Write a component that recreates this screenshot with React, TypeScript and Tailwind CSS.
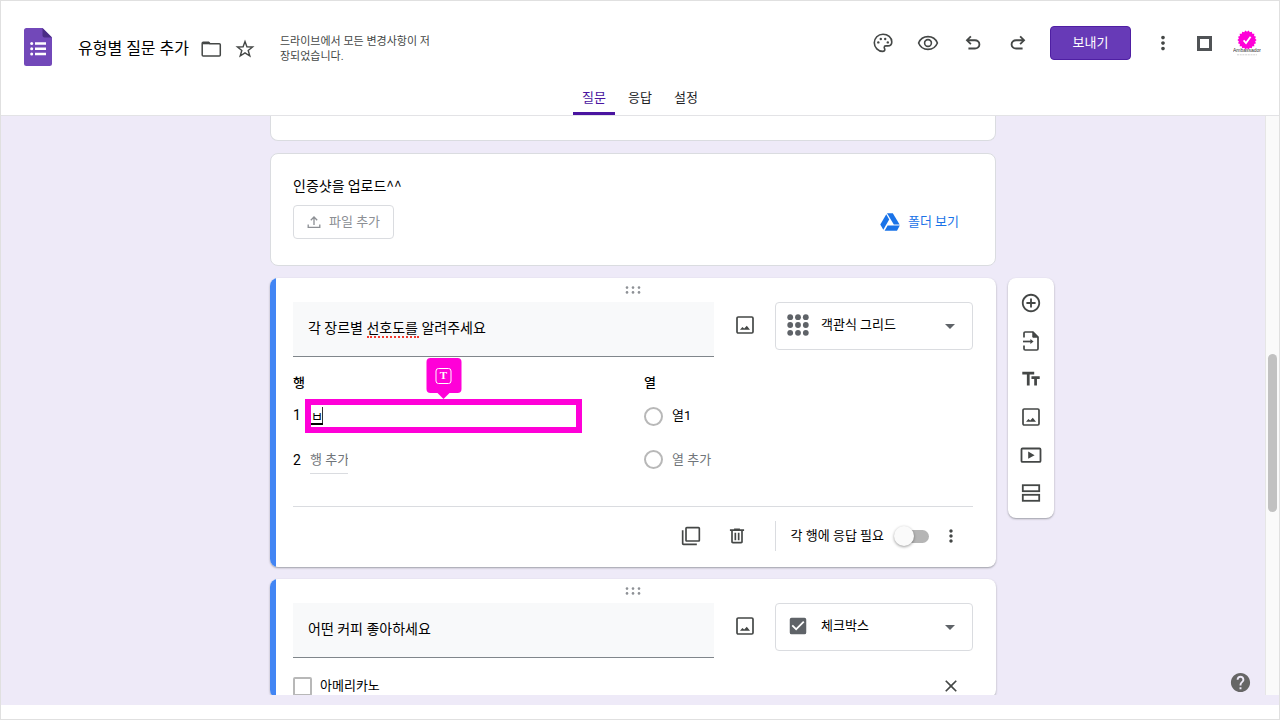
import type { ReactNode } from "react";
import {
  MdArrowDropDown,
  MdCheckBox,
  MdClose,
  MdFilterNone,
  MdHelp,
  MdMoreVert,
  MdOutlineAddCircleOutline,
  MdTextFields,
} from "react-icons/md";

const TABS = ["질문", "응답", "설정"];

function FormsLogo() {
  return (
    <svg viewBox="0 0 28 38" className="h-[38px] w-7 shrink-0" aria-hidden="true">
      <path
        d="M2.5 0H18.5L28 9.5V35.5A2.5 2.5 0 0 1 25.5 38H2.5A2.5 2.5 0 0 1 0 35.5V2.5A2.5 2.5 0 0 1 2.5 0Z"
        fill="#7248b9"
      />
      <path d="M18.5 0L28 9.5H20.5A2 2 0 0 1 18.5 7.5Z" fill="#4a2c85" />
      <g fill="#fff">
        <path d="M11 14.2H22V16.7H11ZM11 19.5H22V22H11ZM11 24.8H22V27.3H11Z" />
        <circle cx="7.7" cy="15.4" r="1.5" />
        <circle cx="7.7" cy="20.7" r="1.5" />
        <circle cx="7.7" cy="26" r="1.5" />
      </g>
    </svg>
  );
}

function FolderIcon() {
  return (
    <svg
      viewBox="0 0 24 24"
      className="h-6 w-6"
      fill="none"
      stroke="currentColor"
      strokeWidth="1.5"
    >
      <path d="M3.2 18V6.2Q3.2 5.2 4.2 5.2H9.6L11 6.8H20.3Q21.3 6.8 21.3 7.8V18Q21.3 19 20.3 19H4.2Q3.2 19 3.2 18Z" />
      <path d="M3.4 6.4H10.8" strokeWidth="1.8" />
    </svg>
  );
}

function StarIcon() {
  return (
    <svg
      viewBox="0 0 24 24"
      className="h-6 w-6"
      fill="none"
      stroke="currentColor"
      strokeWidth="1.4"
    >
      <path d="M12 4.6L13.9 9.8L19.6 10L15.2 13.5L16.8 19L12 15.9L7.2 19L8.8 13.5L4.4 10L10.1 9.8Z" />
    </svg>
  );
}

function PaletteIcon() {
  return (
    <svg viewBox="0 0 24 24" className="h-6 w-6">
      <path
        d="M12 3.2C7 3.2 3.3 7 3.3 11.8S7.2 20.4 11.7 20.4C13.1 20.4 13.8 19.5 13.8 18.5C13.8 17.6 13.2 17.2 13.2 16.4C13.2 15.5 13.9 14.9 14.8 14.9H16.8C19.2 14.9 20.8 13.2 20.8 11C20.8 6.5 16.8 3.2 12 3.2Z"
        fill="none"
        stroke="currentColor"
        strokeWidth="1.6"
      />
      <g fill="currentColor">
        <circle cx="7.3" cy="11.4" r="1.2" />
        <circle cx="9.8" cy="8" r="1.2" />
        <circle cx="14.2" cy="8" r="1.2" />
        <circle cx="16.8" cy="11.4" r="1.2" />
      </g>
    </svg>
  );
}

function EyeIcon() {
  return (
    <svg
      viewBox="0 0 24 24"
      className="h-6 w-6"
      fill="none"
      stroke="currentColor"
      strokeWidth="1.6"
    >
      <path d="M2.6 12C4.2 8 7.7 5.6 12 5.6S19.8 8 21.4 12C19.8 16 16.3 18.4 12 18.4S4.2 16 2.6 12Z" />
      <circle cx="12" cy="12" r="3.4" />
    </svg>
  );
}

function UndoIcon({ className }: { className?: string }) {
  return (
    <svg viewBox="0 0 24 24" fill="currentColor" className={className}>
      <path d="M7 19v-2h7.1q1.575 0 2.738-1T18 13.5T16.838 11T14.1 10H7.8l2.6 2.6L9 14L4 9l5-5l1.4 1.4L7.8 8h6.3q2.425 0 4.163 1.575T20 13.5t-1.737 3.925T14.1 19z" />
    </svg>
  );
}

function ImageIcon() {
  return (
    <svg viewBox="0 0 20 20" className="h-5 w-5">
      <rect
        x="2"
        y="2"
        width="16"
        height="16"
        rx="1.2"
        fill="none"
        stroke="currentColor"
        strokeWidth="1.7"
      />
      <path d="M5 14.7L7.4 12L9.2 13.4L11.8 10.8L15 14.7Z" fill="currentColor" />
    </svg>
  );
}

function ImportIcon() {
  return (
    <svg
      viewBox="0 0 22 22"
      className="h-[22px] w-[22px]"
      fill="none"
      stroke="currentColor"
      strokeWidth="1.7"
    >
      <path d="M4 7.5V3.2Q4 2 5.2 2H13L18 7V18.8Q18 20 16.8 20H5.2Q4 20 4 18.8V15.5" />
      <path d="M12.8 2V7.2H18Z" fill="currentColor" strokeWidth="1" />
      <path d="M3 11.5H11.5" />
      <path d="M10.4 8.9L13.6 11.5L10.4 14.1Z" fill="currentColor" stroke="none" />
    </svg>
  );
}

function VideoIcon() {
  return (
    <svg viewBox="0 0 22 22" className="h-[22px] w-[22px]">
      <rect
        x="1.5"
        y="4.5"
        width="19"
        height="13.4"
        rx="1"
        fill="none"
        stroke="currentColor"
        strokeWidth="1.8"
      />
      <path d="M8.2 7.6L14.6 11.2L8.2 14.8Z" fill="currentColor" />
    </svg>
  );
}

function SectionIcon() {
  return (
    <svg
      viewBox="0 0 22 22"
      className="h-[22px] w-[22px]"
      fill="none"
      stroke="currentColor"
      strokeWidth="1.8"
    >
      <rect x="2.8" y="3.2" width="16.4" height="6" />
      <rect x="2.8" y="12.8" width="16.4" height="6" />
    </svg>
  );
}

function TrashIcon() {
  return (
    <svg viewBox="0 0 24 24" fill="currentColor" className="h-5 w-5">
      <path d="M7 21q-.825 0-1.412-.587T5 19V6H3.5V4h5V3h7v1h5v2H19v13q0 .825-.587 1.413T17 21zM17 6H7v13h10zM9 17h2V8H9zm4 0h2V8h-2z" />
    </svg>
  );
}

function UploadIcon() {
  return (
    <svg
      viewBox="0 0 14 14"
      className="h-3.5 w-3.5"
      fill="none"
      stroke="currentColor"
      strokeWidth="1.3"
    >
      <path d="M1.2 9.4V12.4H12.8V9.4" />
      <path d="M7 10V2.2M3.8 5.2L7 2L10.2 5.2" />
    </svg>
  );
}

function DriveIcon() {
  return (
    <svg viewBox="0 0 20 18" className="h-[18px] w-5" fill="#1a73e8">
      <path d="M7 0.3H12.8L19.6 11.6H13.8Z" />
      <path d="M6.3 1.3L9.2 6.4L3.3 16.8L0.3 11.6Z" />
      <path d="M7.6 12.6H19.8L17 17.8H4.6Z" />
    </svg>
  );
}

function DotGridIcon() {
  return (
    <svg viewBox="0 0 22 22" className="h-[22px] w-[22px]" fill="#5f6368">
      {[3.2, 11, 18.8].map(y =>
        [3.2, 11, 18.8].map(x => <circle key={`${x}-${y}`} cx={x} cy={y} r="2.9" />)
      )}
    </svg>
  );
}

function DragHandle() {
  return (
    <svg
      viewBox="0 0 16 8"
      className="mx-auto h-2 w-4 shrink-0"
      fill="#8e9196"
      aria-hidden="true"
    >
      {[1.6, 6.4].map(y =>
        [2, 8, 14].map(x => <circle key={`${x}-${y}`} cx={x} cy={y} r="1.3" />)
      )}
    </svg>
  );
}

function Avatar() {
  const points = Array.from({ length: 36 }, (_, i) => {
    const r = i % 2 ? 8.2 : 9.6;
    const a = (i * Math.PI) / 18;
    return `${(14 + r * Math.cos(a)).toFixed(2)},${(10 + r * Math.sin(a)).toFixed(2)}`;
  }).join(" ");

  return (
    <button aria-label="계정" className="flex w-7 flex-col items-center">
      <svg viewBox="0 0 28 27" className="h-[27px] w-7">
        <polygon points={points} fill="#ff00d8" />
        <path d="M10.6 10.4L13 13L17.6 6.8" fill="none" stroke="#fff" strokeWidth="1.8" />
        <text
          x="14"
          y="22.4"
          textAnchor="middle"
          fontSize="5"
          fill="#333"
          className="font-['Liberation_Sans',sans-serif]"
        >
          Ambassador
        </text>
        <path d="M4 24.8H24" stroke="#ccc" strokeWidth="0.9" strokeDasharray="2 0.7" />
      </svg>
    </button>
  );
}

function IconButton({ label, children }: { label: string; children: ReactNode }) {
  return (
    <button
      aria-label={label}
      className="flex h-6 w-6 shrink-0 items-center justify-center text-[#444746]"
    >
      {children}
    </button>
  );
}

function Header() {
  return (
    <header className="shrink-0 border-b border-[#e3e3e6] bg-white">
      <div className="flex h-[84px] items-center pr-[18px] pl-[23px]">
        <div className="flex flex-1 items-center pt-2">
          <FormsLogo />
          <div className="flex items-center pt-1">
            <h1 className="ml-[26px] text-base whitespace-nowrap text-black">
              유형별 질문 추가
            </h1>
            <div className="ml-[10px] flex gap-[10px]">
              <IconButton label="폴더로 이동">
                <FolderIcon />
              </IconButton>
              <IconButton label="별표">
                <StarIcon />
              </IconButton>
            </div>
            <p className="ml-[23px] w-[152px] text-[11px] leading-[15px] break-all text-[#444746]">
              드라이브에서 모든 변경사항이 저장되었습니다.
            </p>
          </div>
        </div>
        <div className="flex items-center">
          <div className="flex gap-[21px]">
            <IconButton label="테마">
              <PaletteIcon />
            </IconButton>
            <IconButton label="미리보기">
              <EyeIcon />
            </IconButton>
            <IconButton label="실행취소">
              <UndoIcon className="h-[22px] w-[22px]" />
            </IconButton>
            <IconButton label="다시 실행">
              <UndoIcon className="h-[22px] w-[22px] -scale-x-100" />
            </IconButton>
          </div>
          <button className="ml-5 h-[34px] w-[81px] rounded border border-[#4f1fa3] bg-[#673ab7] text-[13px] text-white">
            보내기
          </button>
          <div className="ml-5 flex items-center gap-[17px]">
            <IconButton label="더보기">
              <MdMoreVert className="h-[22px] w-[22px]" />
            </IconButton>
            <IconButton label="앱">
              <span className="h-[15px] w-[15px] border-3 border-[#505356]" />
            </IconButton>
            <Avatar />
          </div>
        </div>
      </div>
      <nav className="flex h-[30px] justify-center gap-1">
        {TABS.map((tab, i) => (
          <a
            key={tab}
            href="#"
            className={
              i === 0
                ? "w-[42px] rounded-t-[2px] border-b-3 border-[#4a14a0] pt-1 text-center text-[13px] leading-[18px] text-[#4a14a0]"
                : "w-[42px] pt-1 text-center text-[13px] leading-[18px] text-[#202124]"
            }
          >
            {tab}
          </a>
        ))}
      </nav>
    </header>
  );
}

function UploadCard() {
  return (
    <section className="h-[113px] rounded-lg border border-[#dadce0] bg-white px-[22px] pt-[19px]">
      <h2 className="font-['Noto_Sans_CJK_KR',sans-serif] text-sm leading-6 text-black">
        인증샷을 업로드^^
      </h2>
      <div className="mt-2 flex items-center justify-between">
        <button className="flex h-[34px] items-center gap-2 rounded border border-[#dadce0] px-[13px] text-[13px] text-[#8c8f94]">
          <UploadIcon />
          파일 추가
        </button>
        <a
          href="#"
          className="mr-[14px] flex items-center gap-2 text-[13px] text-[#1a73e8]"
        >
          <DriveIcon />
          폴더 보기
        </a>
      </div>
    </section>
  );
}

function QuestionCard({
  title,
  type,
  typeIcon,
  misspelled = false,
  children,
}: {
  title: string;
  type: string;
  typeIcon: ReactNode;
  misspelled?: boolean;
  children: ReactNode;
}) {
  return (
    <section className="flex overflow-hidden rounded-lg bg-white shadow-[0_1px_2px_rgba(60,64,67,0.45)]">
      <div className="w-1.5 shrink-0 bg-[#4285f4]" />
      <div className="min-w-0 flex-1 pt-2 pr-[23px] pl-[17px]">
        <DragHandle />
        <div className="mt-2 flex items-start">
          <div className="relative flex-1">
            <input
              aria-label="질문"
              defaultValue={title}
              spellCheck={false}
              className="h-[55px] w-full border-b border-[#80868b] bg-[#f8f9fa] px-[15px] pb-1 text-sm text-black outline-none"
            />
            {misspelled ? (
              <span className="pointer-events-none absolute top-[34px] left-[74px] w-[52px] border-b-2 border-dotted border-[#f03a2e]" />
            ) : null}
          </div>
          <div className="flex h-[46px] w-[61px] items-center justify-center">
            <IconButton label="이미지 추가">
              <ImageIcon />
            </IconButton>
          </div>
          <div className="relative w-[198px]">
            <span className="pointer-events-none absolute top-0 left-3 flex h-[46px] w-[22px] items-center justify-center">
              {typeIcon}
            </span>
            <select
              aria-label="질문 유형"
              className="h-12 w-full appearance-none rounded border border-[#dadce0] pb-[2px] pl-[45px] text-[13px] text-black"
            >
              <option>{type}</option>
            </select>
            <MdArrowDropDown className="pointer-events-none absolute top-3 right-[11px] h-6 w-6 text-[#5f6368]" />
          </div>
        </div>
        {children}
      </div>
    </section>
  );
}

function GridQuestion() {
  return (
    <QuestionCard
      title="각 장르별 선호도를 알려주세요"
      type="객관식 그리드"
      typeIcon={<DotGridIcon />}
      misspelled
    >
      <div className="grid grid-cols-[351px_1fr] text-[13px]">
        <div>
          <h3 className="mt-4 leading-5 font-medium text-black">행</h3>
          <div className="mt-1.5 flex h-[34px] items-center">
            <label htmlFor="row-1" className="w-3 pb-[2px] text-sm text-black">
              1
            </label>
            <div className="relative h-[34px] w-[277px]">
              <input
                id="row-1"
                defaultValue="ㅂ"
                spellCheck={false}
                className="h-full w-full border-6 border-[#ff00d8] pb-[2px] text-[13px] text-black underline decoration-2 underline-offset-2 outline-none"
              />
              <span className="absolute top-2 left-[17px] h-4 w-px bg-[#333]" />
              {/* callout pinned above the field */}
              <div className="absolute bottom-full left-1/2 mb-[6px] flex h-[35px] w-[35px] -translate-x-1/2 items-center justify-center rounded bg-[#ff00d8]">
                <span className="flex h-4 w-4 items-center justify-center rounded-[3px] border border-white font-['Liberation_Serif',serif] text-[11px] leading-none font-bold text-white">
                  T
                </span>
                <span className="absolute top-full border-x-6 border-t-6 border-x-transparent border-t-[#ff00d8]" />
              </div>
            </div>
          </div>
          <div className="mt-[10px] flex h-[33px] items-center">
            <label htmlFor="row-2" className="w-[17px] text-sm text-black">
              2
            </label>
            <input
              id="row-2"
              placeholder="행 추가"
              className="h-7 w-[38px] border-b border-[#dadce0] text-[13px] outline-none placeholder:text-[#70757a]"
            />
          </div>
        </div>
        <div>
          <h3 className="mt-4 leading-5 font-medium text-black">열</h3>
          <label className="mt-1.5 flex h-[34px] items-center gap-[9px] text-black">
            <input
              type="radio"
              name="column"
              className="h-[19px] w-[19px] appearance-none rounded-full border-2 border-[#b8b8b8]"
            />
            열1
          </label>
          <label className="mt-[10px] flex h-[33px] items-center gap-[9px] text-[#70757a]">
            <input
              type="radio"
              name="column"
              className="h-[19px] w-[19px] appearance-none rounded-full border-2 border-[#b8b8b8]"
            />
            열 추가
          </label>
        </div>
      </div>
      <div className="mt-[30px] flex h-[61px] items-center justify-end border-t border-[#dadce0] pr-[10px] pb-[2px]">
        <IconButton label="복사">
          <MdFilterNone className="h-5 w-5" />
        </IconButton>
        <div className="ml-[22px] flex">
          <IconButton label="삭제">
            <TrashIcon />
          </IconButton>
        </div>
        <span className="ml-[26px] h-[30px] w-px bg-[#dadce0]" />
        <label className="ml-[15px] flex items-center text-[13px] text-black">
          각 행에 응답 필요
          <span className="relative ml-[10px] flex h-5 w-[35px] items-center">
            <input
              type="checkbox"
              role="switch"
              className="ml-1 h-[13px] w-[31px] appearance-none rounded-full bg-[#b5b5b5]"
            />
            <span className="absolute top-0 left-0 h-5 w-5 rounded-full bg-[#fafafa] shadow-[0_1px_3px_rgba(0,0,0,0.4)]" />
          </span>
        </label>
        <div className="ml-[10px] flex">
          <IconButton label="옵션 더보기">
            <MdMoreVert className="h-5 w-5" />
          </IconButton>
        </div>
      </div>
    </QuestionCard>
  );
}

function CheckboxQuestion() {
  return (
    <QuestionCard
      title="어떤 커피 좋아하세요"
      type="체크박스"
      typeIcon={<MdCheckBox className="h-[22px] w-[22px] shrink-0 text-[#5f6368]" />}
    >
      <div className="mt-4 flex h-6 items-center justify-between pr-[10px]">
        <label className="flex items-center gap-2 text-[13px] text-black">
          <input
            type="checkbox"
            className="h-[19px] w-[19px] appearance-none rounded-[2px] border-2 border-[#b8b8b8]"
          />
          아메리카노
        </label>
        <IconButton label="옵션 삭제">
          <MdClose className="h-5 w-5" />
        </IconButton>
      </div>
    </QuestionCard>
  );
}

function SideToolbar() {
  return (
    <aside className="mt-[162px] ml-3 flex h-fit w-[46px] flex-col items-center gap-[14px] rounded-lg bg-white pt-[13px] pb-[13px] shadow-[0_1px_2px_rgba(60,64,67,0.45)]">
      <IconButton label="질문 추가">
        <MdOutlineAddCircleOutline className="h-[22px] w-[22px]" />
      </IconButton>
      <IconButton label="질문 가져오기">
        <ImportIcon />
      </IconButton>
      <IconButton label="제목 및 설명 추가">
        <MdTextFields className="h-[22px] w-[22px]" />
      </IconButton>
      <IconButton label="이미지 추가">
        <ImageIcon />
      </IconButton>
      <IconButton label="동영상 추가">
        <VideoIcon />
      </IconButton>
      <IconButton label="섹션 추가">
        <SectionIcon />
      </IconButton>
    </aside>
  );
}

export default function App() {
  return (
    <div className="flex h-screen flex-col overflow-hidden border border-[#e0e0e0] bg-white font-['Roboto','Noto_Sans_CJK_KR',sans-serif]">
      <Header />
      <div className="relative flex min-h-0 flex-1 bg-[#eeeaf8]">
        <main className="grid flex-1 grid-cols-[1fr_minmax(0,726px)_1fr] overflow-hidden">
          <div />
          <div className="flex flex-col gap-3">
            <div className="h-[25px] shrink-0 rounded-b-lg border border-t-0 border-[#dadce0] bg-white" />
            <UploadCard />
            <GridQuestion />
            <CheckboxQuestion />
          </div>
          <SideToolbar />
        </main>
        <div className="w-[14px] shrink-0 border-l border-[#e6e6e6] bg-[#fafafa] px-[2px] pt-[238px]">
          <div className="h-[158px] rounded-full bg-[#c1c1c1]" />
        </div>
        <button aria-label="도움말" className="absolute right-[27px] bottom-px text-[#666]">
          <MdHelp className="h-[23px] w-[23px]" />
        </button>
      </div>
      <div className="h-[10px] shrink-0 bg-[#eeeaf8]" />
      <div className="h-[14px] shrink-0" />
    </div>
  );
}
